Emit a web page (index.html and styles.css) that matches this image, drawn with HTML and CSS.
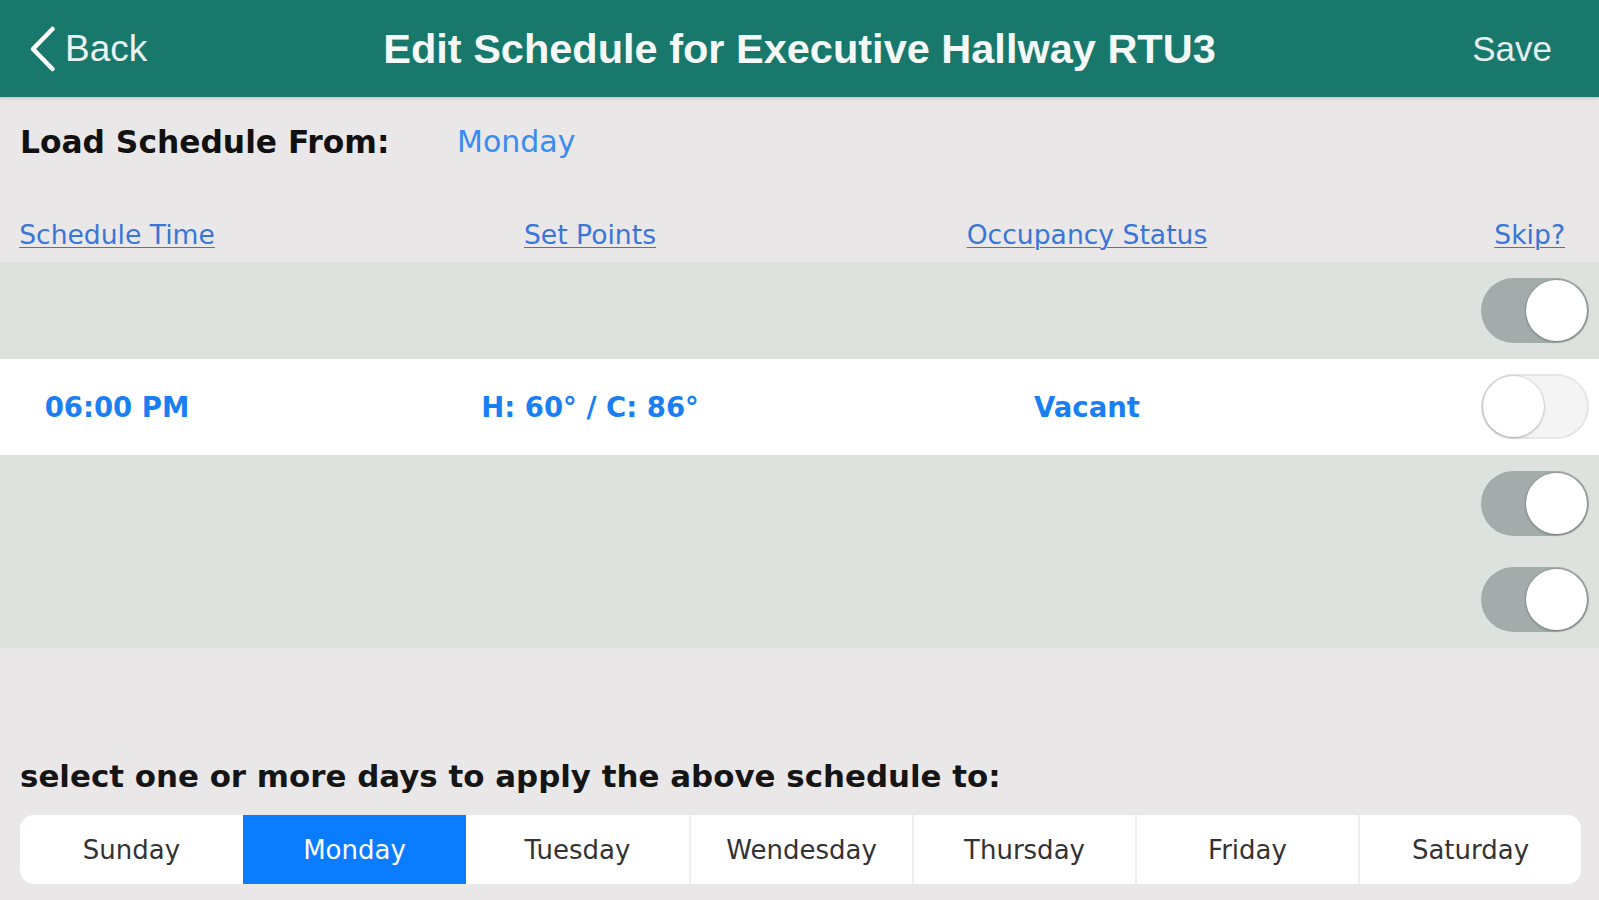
FILE: index.html
```html
<!DOCTYPE html>
<html>
<head>
<meta charset="utf-8">
<link rel="stylesheet" href="styles.css">
</head>
<body>
<header class="nav">
  <div class="nav-left">
    <svg class="chev" width="28" height="46" viewBox="0 0 28 46"><path d="M24.5 3 L5 23 L24.5 43" fill="none" stroke="#fff" stroke-width="4.5" stroke-linecap="round" stroke-linejoin="round"/></svg>
    <span class="back">Back</span>
  </div>
  <div class="nav-title">Edit Schedule for Executive Hallway RTU3</div>
  <div class="nav-right"><span class="save">Save</span></div>
</header>

<section class="load">
  <span class="load-label">Load Schedule From:</span>
  <span class="load-value">Monday</span>
</section>

<section class="cols colhead">
  <div class="c1"><a class="link">Schedule Time</a></div>
  <div class="c2"><a class="link">Set Points</a></div>
  <div class="c3"><a class="link">Occupancy Status</a></div>
  <div class="c4 skip"><a class="link">Skip?</a></div>
</section>

<section class="rows">
  <div class="cols row gray">
    <div class="c1"></div><div class="c2"></div><div class="c3"></div>
    <div class="c4"><span class="toggle on"><span class="thumb"></span></span></div>
  </div>
  <div class="cols row white">
    <div class="c1 val">06:00 PM</div>
    <div class="c2 val">H: 60° / C: 86°</div>
    <div class="c3 val">Vacant</div>
    <div class="c4"><span class="toggle off"><span class="thumb"></span></span></div>
  </div>
  <div class="cols row gray">
    <div class="c1"></div><div class="c2"></div><div class="c3"></div>
    <div class="c4"><span class="toggle on"><span class="thumb"></span></span></div>
  </div>
  <div class="cols row gray">
    <div class="c1"></div><div class="c2"></div><div class="c3"></div>
    <div class="c4"><span class="toggle on"><span class="thumb"></span></span></div>
  </div>
</section>

<div class="spacer"></div>

<section class="days">
  <div class="days-label">select one or more days to apply the above schedule to:</div>
  <div class="seg">
    <div class="seg-item">Sunday</div>
    <div class="seg-item active">Monday</div>
    <div class="seg-item">Tuesday</div>
    <div class="seg-item">Wendesday</div>
    <div class="seg-item">Thursday</div>
    <div class="seg-item">Friday</div>
    <div class="seg-item">Saturday</div>
  </div>
</section>
</body>
</html>
```

FILE: styles.css
```css
* { box-sizing: border-box; }
html, body { margin: 0; padding: 0; }
body {
  width: 1599px;
  height: 900px;
  overflow: hidden;
  background: #e9e7e7;
  font-family: "DejaVu Sans", "Liberation Sans", sans-serif;
  display: flex;
  flex-direction: column;
}
.nav {
  height: 97px;
  flex: none;
  background: #19786c;
  display: grid;
  grid-template-columns: 1fr auto 1fr;
  align-items: center;
  color: #fff;
  box-shadow: 0 2px 2px rgba(0,0,0,0.12);
  position: relative;
  z-index: 1;
  font-family: "Liberation Sans", Arial, sans-serif;
}
.nav-left {
  display: flex;
  align-items: center;
  padding-left: 28px;
  gap: 9px;
}
.chev { display: block; }
.back { font-size: 37px; color: #eaf3f1; }
.nav-title { font-size: 41.5px; font-weight: bold; color: #f4f8f7; }
.nav-right { display: flex; justify-content: flex-end; padding-right: 47px; }
.save { font-size: 35px; color: #e3efec; }

.load {
  height: 88px;
  flex: none;
  display: flex;
  align-items: center;
  padding-left: 20px;
  padding-top: 1px;
}
.load-label { font-size: 31.3px; font-weight: bold; color: #111; width: 437px; }
.load-value { font-size: 30px; color: #3b8cf0; }

.cols {
  display: grid;
  grid-template-columns: 234px 712px 282px 1fr;
  align-items: center;
}
.cols > div { text-align: center; }
.colhead {
  height: 77px;
  flex: none;
  align-items: end;
  padding-bottom: 12px;
}
.link {
  font-size: 26.6px;
  color: #3a76d8;
  text-decoration: underline;
  text-underline-offset: 3px;
  text-decoration-thickness: 1px;
}

.rows { flex: none; }
.row { height: 96.5px; }
.gray { background: #dde2df; }
.white { background: #ffffff; }
.val { font-size: 27.5px; font-weight: bold; color: #1a7ff2; }
.c4 { display: flex; justify-content: flex-end; padding-right: 10px; }
.c4.skip { padding-right: 34px; }

.toggle {
  width: 108px;
  height: 65px;
  border-radius: 33px;
  position: relative;
  display: block;
}
.toggle.on { background: #a3acab; }
.toggle.off { background: #f4f4f4; box-shadow: inset 0 0 0 2px #e6e6e6; }
.thumb {
  position: absolute;
  top: 2px;
  width: 61px;
  height: 61px;
  border-radius: 50%;
  background: #fff;
  box-shadow: 0 1px 3px rgba(0,0,0,0.25), 0 0 0 1px rgba(0,0,0,0.06);
}
.toggle.on .thumb { right: 2px; }
.toggle.off .thumb { left: 2px; }

.spacer { flex: 1; }

.days { flex: none; padding: 0 18px 16px 20px; }
.days-label {
  font-size: 30.9px;
  font-weight: bold;
  color: #151515;
  line-height: 36px;
  margin-bottom: 21px;
}
.seg {
  display: grid;
  grid-template-columns: repeat(7, 1fr);
  height: 69px;
  background: #fff;
  border-radius: 14px;
  overflow: hidden;
}
.seg-item {
  display: flex;
  align-items: center;
  justify-content: center;
  font-size: 26px;
  color: #333;
  border-left: 2px solid #eeeeee;
}
.seg-item:first-child { border-left: none; }
.seg-item.active { background: #0a7cff; color: #fff; border-left: none; }
.seg-item.active + .seg-item { border-left: none; }
```
